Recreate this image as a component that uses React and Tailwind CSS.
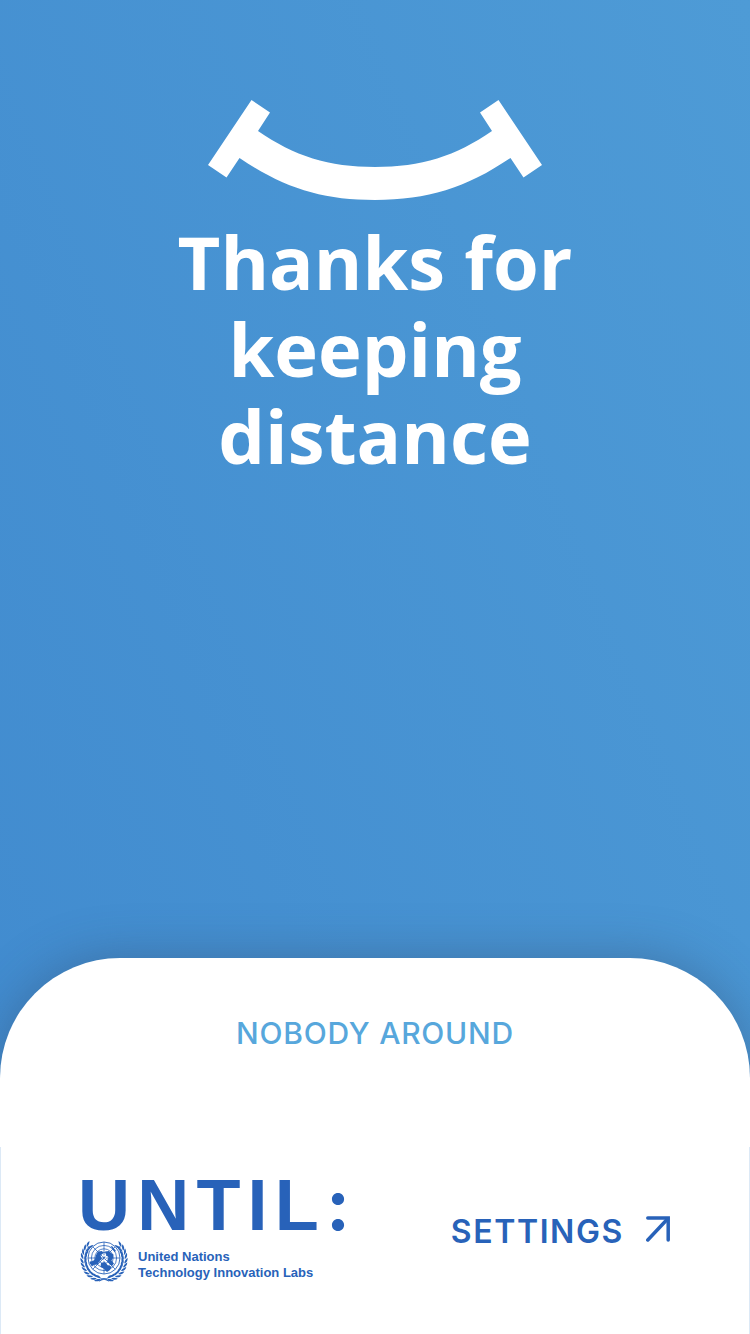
import React from "react";

function Smile() {
  return (
    <svg viewBox="0 0 334 100" className="w-[334px] h-[100px]" fill="#fff" aria-hidden="true">
      <path d="M43.500 0 L62 12.500 L50 31 C86 56 121 67 167 67 C213 67 248 56 284 31 L272 12.500 L290.500 0 L334 65 L315.500 77.500 L302.500 58 C258 88 220 100 167 100 C114 100 76 88 31.500 58 L18.500 77.500 L0 65 Z" />
    </svg>
  );
}

const LEAVES = [
  [18, 37.4, 8],
  [14.4, 36, 18],
  [11, 33.8, 30],
  [8.2, 31, 44],
  [6, 27.6, 58],
  [4.6, 23.8, 70],
  [3.8, 19.8, 82],
  [3.9, 15.6, 94],
  [4.8, 11.6, 106],
  [6.4, 7.8, 120],
  [9, 4.6, 134],
];

function Laurel() {
  return (
    <g>
      <path d="M28.500 39.500 C19 37.500 9.500 33 6 25 C3.800 18.500 4.500 11 9 5" fill="none" strokeWidth="0.600" stroke="#2862b9" />
      {LEAVES.map(([x, y, a]) => (
        <g key={a} transform={`translate(${x} ${y}) rotate(${a})`}>
          <path d="M2.600 -0.500 C1.600 -2.700 -1 -3.600 -3.600 -2.700 C-1.800 -1 0.500 -0.300 2.600 -0.500 Z" />
          <path d="M2.600 0.400 C1.600 2.700 -0.800 3.700 -3.600 2.900 C-2 1.200 0.300 0.300 2.600 0.400 Z" />
        </g>
      ))}
      <path d="M20 37 C22.500 36.500 27 37.500 29.500 40 L28.500 40.600 C26 38.600 23 37.800 20 37 Z" />
    </g>
  );
}

function Emblem() {
  return (
    <svg viewBox="0 0 48 41" className="w-12 h-[41px] shrink-0" fill="#2862b9" aria-hidden="true">
      <Laurel />
      <g transform="translate(48 0) scale(-1 1)">
        <Laurel />
      </g>
      <circle cx="24" cy="17" r="16.400" fill="#fff" />
      <g fill="none" stroke="#2862b9" strokeWidth="0.800">
        <circle cx="24" cy="17" r="16" strokeWidth="0.900" />
        <circle cx="24" cy="17" r="12.600" />
        <circle cx="24" cy="17" r="9.200" />
        <circle cx="24" cy="17" r="5.600" />
        <path d="M24 1 V33 M8 17 H40 M12.700 5.700 L35.300 28.300 M35.300 5.700 L12.700 28.300" />
      </g>
      <path d="M16 14 L18 10.500 L22 10 L23.500 12 L20.500 14.500 L22 18 L19.500 20 L17.500 23.500 L13.500 24 L12 25.500 L9.500 22 L10 20.500 L13 20 L15 18 Z" />
      <path d="M25 10.500 L29 10 L31 12 L33.500 13.500 L33 17 L31.500 19.500 L34 22.500 L32 25 L29 22.500 L27 20 L28.500 16.500 L26 13.500 Z" />
      <path d="M21 22 L25 21 L28 24.500 L31.500 25.500 L30 29 L27 31 L23.500 27.500 L20.500 26 Z" />
      <path d="M30.500 5 L32.500 5.500 L36 10 L34.500 11 Z" />
      <path d="M22.500 15 L25.500 14.500 L26 16.500 L23.500 19.500 L26 19.500" fill="none" stroke="#fff" strokeWidth="1" />
    </svg>
  );
}

export default function App() {
  return (
    <div className="flex min-h-screen flex-col bg-[linear-gradient(68deg,#418bcf_5%,#4e9bd6_100%)] font-['Inter',sans-serif]">
      <main className="flex flex-1 flex-col items-center px-20 pt-[100px]">
        <Smile />
        <h1 className="mt-[18px] max-w-[430px] text-center font-['Open_Sans',sans-serif] text-[74px] leading-[87px] font-bold text-white">
          Thanks for keeping distance
        </h1>
      </main>
      <section className="rounded-t-[120px] bg-white shadow-[0_0_50px_rgba(50,70,100,0.4)]">
        <p className="pt-[57px] pb-24 text-center text-[30px] leading-9 font-medium tracking-wide text-[#57a7dc]">
          NOBODY AROUND
        </p>
        <footer className="flex items-start justify-between border-x border-[#dce9f6] px-[79px] pt-6 pb-[52px] text-[#2862b9]">
          <div>
            <div className="-ml-0.5 font-['Liberation_Sans',sans-serif] text-[72px] leading-[66px] font-bold tracking-widest">
              UNTIL<span className="font-['Inter',sans-serif]">:</span>
            </div>
            <div className="mt-[3px] flex items-start gap-[10px]">
              <Emblem />
              <p className="pt-2 font-['Liberation_Sans',sans-serif] text-[13px] leading-4 font-bold">
                United Nations
                <br />
                Technology Innovation Labs
              </p>
            </div>
          </div>
          <button type="button" className="mt-[43px] flex items-start gap-[22px] text-[32px] leading-9 font-semibold tracking-wider">
            SETTINGS
            <svg viewBox="0 0 24 26" className="mt-0.5 h-[26px] w-6" fill="none" stroke="currentColor" strokeWidth="3.500" aria-hidden="true">
              <path d="M1.800 2 H22.200 V24" strokeLinecap="round" strokeLinejoin="miter" />
              <path d="M21.500 3 L1.800 24" strokeLinecap="round" />
            </svg>
          </button>
        </footer>
      </section>
    </div>
  );
}
